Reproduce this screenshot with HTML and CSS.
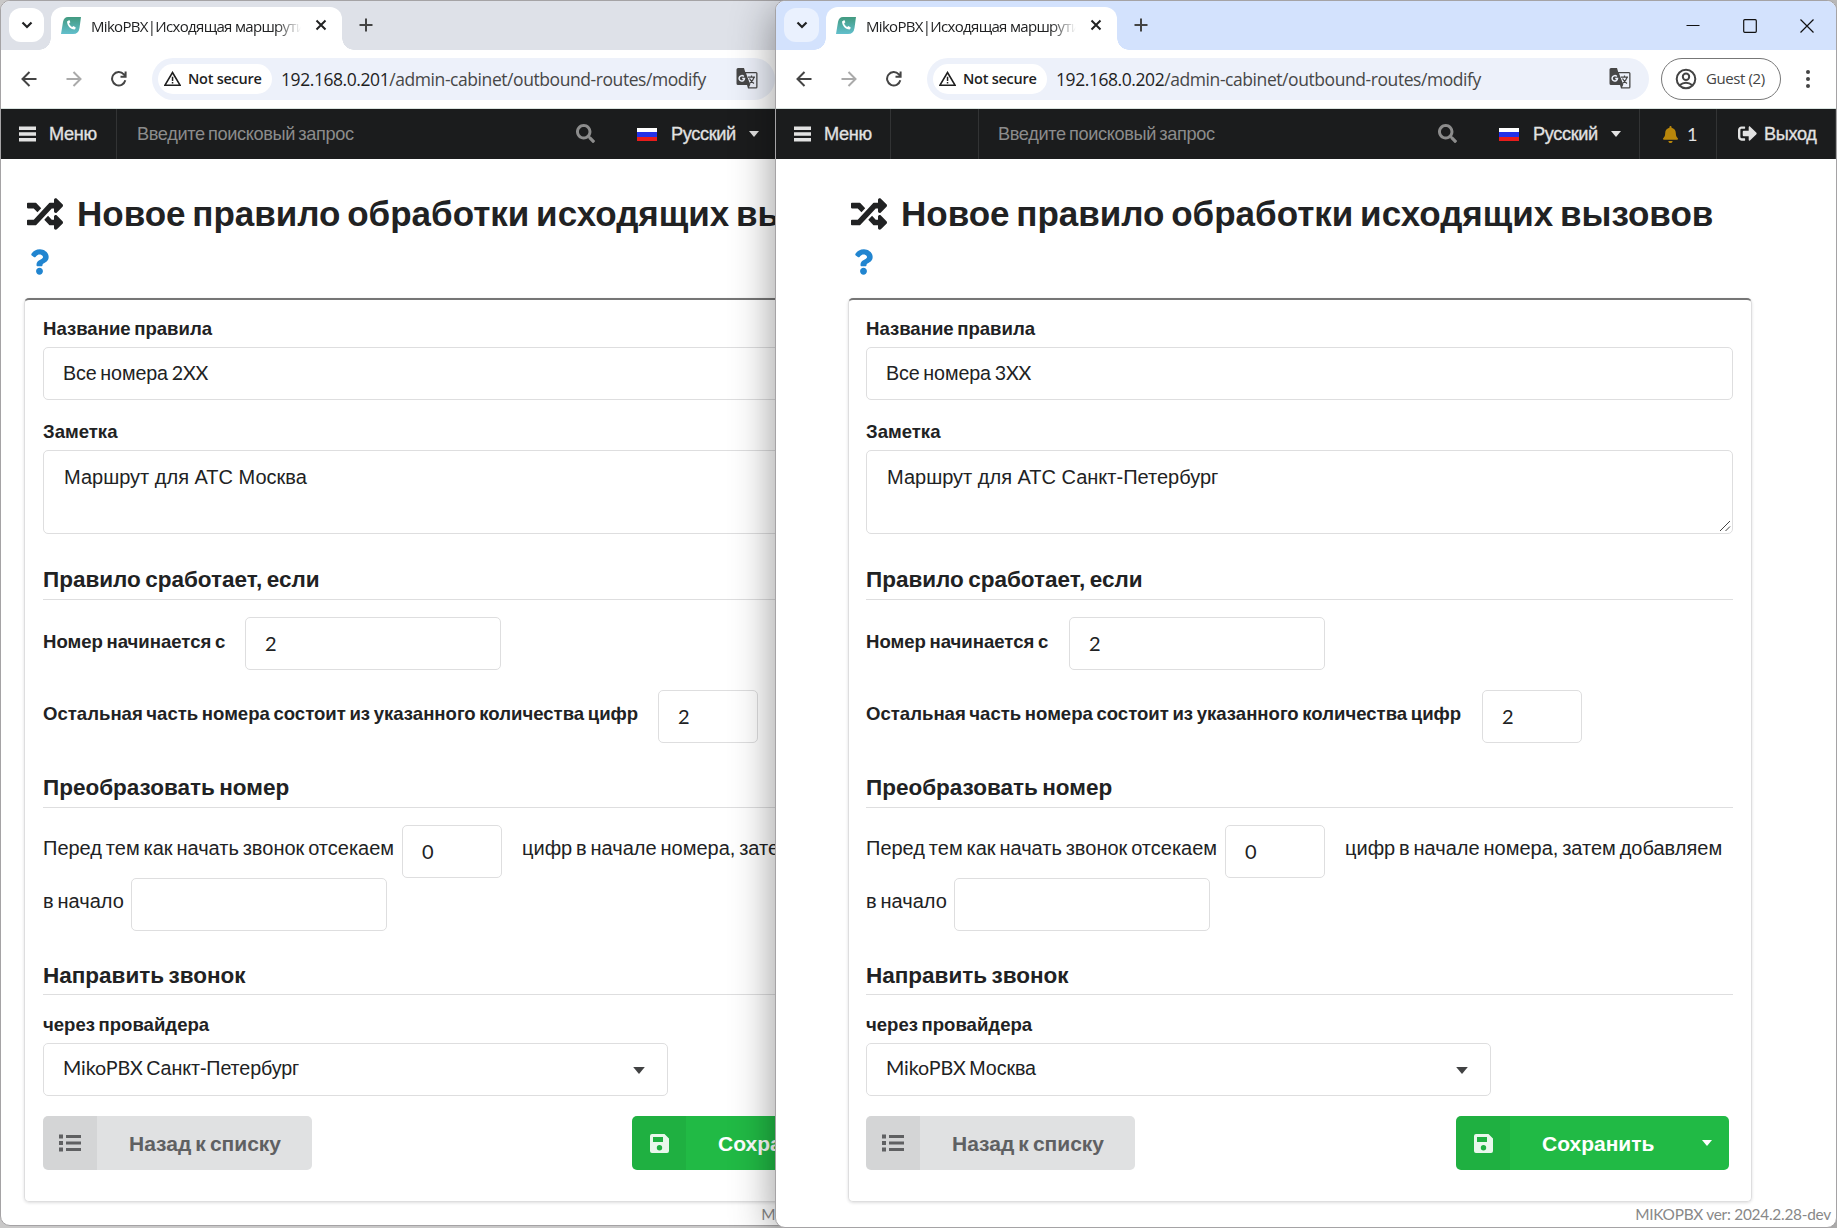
FILE: index.html
```html
<!DOCTYPE html>
<html lang="ru">
<head>
<meta charset="utf-8">
<title>MikoPBX|Исходящая маршрутизация</title>
<link rel="stylesheet" href="styles.css">
</head>
<body>
<svg class="sprite" aria-hidden="true">
  <symbol id="random" viewBox="0 0 512 512"><path d="M504.971 359.029c9.373 9.373 9.373 24.569 0 33.941l-80 79.984c-15.01 15.01-40.971 4.49-40.971-16.971V416h-58.785a12.004 12.004 0 0 1-8.773-3.812l-70.556-75.596 53.333-57.143L352 336h32v-39.981c0-21.438 25.943-31.998 40.971-16.971l80 79.981zM12 176h84l52.781 56.551 53.333-57.143-70.556-75.596A11.999 11.999 0 0 0 122.785 96H12c-6.627 0-12 5.373-12 12v56c0 6.627 5.373 12 12 12zm372 0v39.984c0 21.46 25.961 31.98 40.971 16.971l80-79.984c9.373-9.373 9.373-24.569 0-33.941l-80-79.981C409.943 24.021 384 34.582 384 56.019V96h-58.785a12.004 12.004 0 0 0-8.773 3.812L96 336H12c-6.627 0-12 5.373-12 12v56c0 6.627 5.373 12 12 12h110.785c3.326 0 6.503-1.381 8.773-3.812L352 176h32z"/></symbol>
  <symbol id="question" viewBox="0 0 384 512"><path d="M202.021 0C122.202 0 70.503 32.703 29.914 91.026c-7.363 10.58-5.093 25.086 5.178 32.874l43.138 32.709c10.373 7.865 25.132 6.026 33.253-4.148 25.049-31.381 43.63-49.449 82.757-49.449 30.764 0 68.816 19.799 68.816 49.631 0 22.552-18.617 34.134-48.993 51.164-35.423 19.86-82.299 44.576-82.299 106.405V320c0 13.255 10.745 24 24 24h72.471c13.255 0 24-10.745 24-24v-5.773c0-42.86 125.268-44.645 125.268-160.627C377.504 66.256 286.902 0 202.021 0zM192 373.459c-38.196 0-69.271 31.075-69.271 69.271 0 38.195 31.075 69.270 69.271 69.270s69.271-31.075 69.271-69.271-31.075-69.270-69.271-69.270z"/></symbol>
  <symbol id="search" viewBox="0 0 512 512"><path d="M505 442.7L405.3 343c-4.5-4.5-10.6-7-17-7H372c27.6-35.3 44-79.7 44-128C416 93.1 322.9 0 208 0S0 93.1 0 208s93.1 208 208 208c48.3 0 92.7-16.4 128-44v16.3c0 6.4 2.5 12.5 7 17l99.7 99.7c9.4 9.4 24.6 9.4 33.9 0l28.3-28.3c9.4-9.4 9.4-24.6.1-34zM208 336c-70.7 0-128-57.2-128-128 0-70.7 57.2-128 128-128 70.7 0 128 57.2 128 128 0 70.7-57.2 128-128 128z"/></symbol>
  <symbol id="bell" viewBox="0 0 448 512"><path d="M224 512c35.32 0 63.97-28.65 63.97-64H160.03c0 35.35 28.65 64 63.97 64zm215.39-149.71c-19.32-20.76-55.47-51.99-55.47-154.29 0-77.7-54.48-139.9-127.94-155.16V32c0-17.67-14.32-32-31.98-32s-31.98 14.33-31.98 32v20.84C118.56 68.1 64.08 130.3 64.08 208c0 102.3-36.15 133.53-55.47 154.29-6 6.45-8.66 14.16-8.61 21.71.11 16.4 12.98 32 32.1 32h383.8c19.12 0 32-15.6 32.1-32 .05-7.55-2.61-15.27-8.61-21.71z"/></symbol>
  <symbol id="signout" viewBox="0 0 512 512"><path d="M497 273L329 441c-15 15-41 4.5-41-17v-96H152c-13.3 0-24-10.7-24-24v-96c0-13.3 10.7-24 24-24h136V88c0-21.4 25.9-32 41-17l168 168c9.3 9.4 9.3 24.6 0 34zM192 436v-40c0-6.6-5.4-12-12-12H96c-17.7 0-32-14.3-32-32V160c0-17.7 14.3-32 32-32h84c6.6 0 12-5.4 12-12V76c0-6.6-5.4-12-12-12H96c-53 0-96 43-96 96v192c0 53 43 96 96 96h84c6.6 0 12-5.4 12-12z"/></symbol>
  <symbol id="bars" viewBox="0 0 17 16"><path d="M0 .5h17v3.4H0zM0 6.3h17v3.4H0zM0 12.1h17v3.4H0z"/></symbol>
  <symbol id="caret" viewBox="0 0 10 6"><path d="M0 0h10L5 6z"/></symbol>
  <symbol id="list" viewBox="0 0 22 18"><path d="M0 .5h4v4H0zM0 7h4v4H0zM0 13.5h4v4H0zM7 1h15v3H7zM7 7.5h15v3H7zM7 14h15v3H7z"/></symbol>
  <symbol id="save" viewBox="0 0 19 19"><path fill-rule="evenodd" d="M2 0h12.5L19 4.5V17a2 2 0 0 1-2 2H2a2 2 0 0 1-2-2V2a2 2 0 0 1 2-2zM3 3v5h10V3zM9.500 11a2.700 2.700 0 1 0 0 5.400 2.700 2.700 0 0 0 0-5.400z"/></symbol>
  <symbol id="logo" viewBox="0 0 20 17"><path fill="url(#logofill)" d="M7 0h13l-1.500 11q-.8 6-6.500 6H0L2 5Q3 0 7 0z"/><path d="M6 4.500c.3 4.500 3 7.500 7.700 7.900l1.200-1.600-2.300-1.700-1.500.8C9.500 9 8.500 7.800 8.200 6.200l1.200-.9L8.300 3z" fill="#fff"/></symbol>
  <symbol id="chevron" viewBox="0 0 12 8"><path d="M1.500 1.500L6 6l4.500-4.500" fill="none" stroke="currentColor" stroke-width="2.200"/></symbol>
  <symbol id="cross" viewBox="0 0 12 12"><path d="M1.500 1.500l9 9M10.500 1.500l-9 9" fill="none" stroke="currentColor" stroke-width="2"/></symbol>
  <symbol id="plus" viewBox="0 0 14 14"><path d="M7 .5v13M.5 7h13" fill="none" stroke="currentColor" stroke-width="2"/></symbol>
  <symbol id="back" viewBox="0 0 16 16"><path d="M15.500 8H2M8.500 1L1.500 8l7 7" fill="none" stroke="currentColor" stroke-width="2"/></symbol>
  <symbol id="reload" viewBox="0 0 16 16"><path d="M14.300 9.300A6.700 6.700 0 1 1 12.800 3.300L15 5.500M14.600 .5v5.300H9.500" fill="none" stroke="currentColor" stroke-width="2"/></symbol>
  <symbol id="warn" viewBox="0 0 17 15"><path d="M8.500 1.500L16 14.200H1z" fill="none" stroke="currentColor" stroke-width="1.600"/><path d="M7.800 5.800h1.500v4.200H7.800zM7.800 11h1.500v1.500H7.800z"/></symbol>
  <symbol id="translate" viewBox="0 0 22 21"><path d="M2 0h6l1.200 4H20q1.500 0 1.500 1.500V19q0 1.500-1.500 1.500h-8L11 17H2q-1.500 0-1.500-1.500v-14Q.5 0 2 0z"/><path fill="#edf1fa" d="M10 5.300h10.200v13.900H13l1.300-2.500z"/><path d="M7.800 8.500a2.700 2.700 0 1 0 .7 2H6.200" fill="none" stroke="#edf1fa" stroke-width="1.500"/><path d="M12 9.200h7M15.500 7.500v1.700M18 9.500q-1 3.500-4.500 6M13.500 10.500q1.500 3 4.500 5" fill="none" stroke="currentColor" stroke-width="1.200"/></symbol>
  <symbol id="person" viewBox="0 0 22 22"><circle cx="11" cy="11" r="9.300" fill="none" stroke="currentColor" stroke-width="2"/><circle cx="11" cy="8.700" r="3.200" fill="none" stroke="currentColor" stroke-width="2"/><path d="M4.500 17.200q6.500-5 13 0" fill="none" stroke="currentColor" stroke-width="2"/></symbol>
  <defs><linearGradient id="logofill" x1="0" y1="0" x2="0" y2="1"><stop offset="0" stop-color="#429a80"/><stop offset="1" stop-color="#62bfcc"/></linearGradient></defs>
</svg>

<main class="desktop">
  <section class="window window-back">
    <div class="tabstrip">
      <div class="tab-search"><svg class="i-chevron"><use href="#chevron"/></svg></div>
      <div class="tab">
        <svg class="i-logo"><use href="#logo"/></svg>
        <span class="tab-title">MikoPBX|Исходящая маршрути</span>
        <svg class="i-cross"><use href="#cross"/></svg>
      </div>
      <svg class="i-plus"><use href="#plus"/></svg>
    </div>
    <div class="toolbar">
      <svg class="i-nav"><use href="#back"/></svg>
      <svg class="i-nav i-forward"><use href="#back"/></svg>
      <svg class="i-nav"><use href="#reload"/></svg>
      <div class="omnibox">
        <div class="chip"><svg class="i-warn"><use href="#warn"/></svg><span>Not secure</span></div>
        <span class="url"><b>192.168.0.201</b>/admin-cabinet/outbound-routes/modify</span>
        <svg class="i-translate"><use href="#translate"/></svg>
      </div>
    </div>
    <nav class="menu">
      <div class="menu-main"><svg class="i-bars"><use href="#bars"/></svg><span>Меню</span></div>
      <div class="menu-search"><span>Введите поисковый запрос</span><svg class="i-search"><use href="#search"/></svg></div>
      <div class="menu-lang"><i class="flag"></i><span>Русский</span><svg class="i-caret"><use href="#caret"/></svg></div>
    </nav>
    <div class="page">
      <h1 class="title"><svg class="i-random"><use href="#random"/></svg><span>Новое правило обработки исходящих вызовов</span></h1>
      <svg class="i-question"><use href="#question"/></svg>
      <form class="segment">
        <div class="label">Название правила</div>
        <div class="input name">Все номера <span class="lat">2XX</span></div>
        <div class="label label-next">Заметка</div>
        <div class="textarea">Маршрут для АТС Москва</div>
        <h3 class="header">Правило сработает, если</h3>
        <div class="row"><span class="label starts">Номер начинается с</span><div class="input wide lat">2</div></div>
        <div class="row row-next"><span class="label rest">Остальная часть номера состоит из указанного количества цифр</span><div class="input small lat">2</div></div>
        <h3 class="header">Преобразовать номер</h3>
        <div class="row"><span class="text trim">Перед тем как начать звонок отсекаем</span><div class="input small lat">0</div><span class="text after">цифр в начале номера, затем добавляем</span></div>
        <div class="row"><span class="text prepend">в начало</span><div class="input wide"></div></div>
        <h3 class="header header-last">Направить звонок</h3>
        <div class="label">через провайдера</div>
        <div class="input dropdown"><span><span class="lat">MikoPBX</span> Санкт-Петербург</span><svg class="i-caret"><use href="#caret"/></svg></div>
        <div class="actions">
          <div class="button"><span class="button-icon"><svg class="i-list"><use href="#list"/></svg></span><span class="button-text">Назад к списку</span></div>
          <div class="button green"><span class="button-icon"><svg class="i-save"><use href="#save"/></svg></span><span class="button-text">Сохранить</span><svg class="i-caret"><use href="#caret"/></svg></div>
        </div>
      </form>
    </div>
    <footer class="version">MIKOPBX ver: 2024.2.28-dev</footer>
  </section>

  <section class="window window-front">
    <div class="tabstrip">
      <div class="tab-search"><svg class="i-chevron"><use href="#chevron"/></svg></div>
      <div class="tab">
        <svg class="i-logo"><use href="#logo"/></svg>
        <span class="tab-title">MikoPBX|Исходящая маршрути</span>
        <svg class="i-cross"><use href="#cross"/></svg>
      </div>
      <svg class="i-plus"><use href="#plus"/></svg>
      <div class="controls">
        <svg viewBox="0 0 14 14"><path d="M.5 6.500h13"/></svg>
        <svg viewBox="0 0 14 14"><rect x=".7" y=".7" width="12.600" height="12.600" rx="1"/></svg>
        <svg viewBox="0 0 14 14"><path d="M.5.5l13 13M13.500.5l-13 13"/></svg>
      </div>
    </div>
    <div class="toolbar">
      <svg class="i-nav"><use href="#back"/></svg>
      <svg class="i-nav i-forward"><use href="#back"/></svg>
      <svg class="i-nav"><use href="#reload"/></svg>
      <div class="omnibox">
        <div class="chip"><svg class="i-warn"><use href="#warn"/></svg><span>Not secure</span></div>
        <span class="url"><b>192.168.0.202</b>/admin-cabinet/outbound-routes/modify</span>
        <svg class="i-translate"><use href="#translate"/></svg>
      </div>
      <div class="guest"><svg class="i-person"><use href="#person"/></svg><span>Guest (2)</span></div>
      <div class="dots"><i></i><i></i><i></i></div>
    </div>
    <nav class="menu">
      <div class="menu-main"><svg class="i-bars"><use href="#bars"/></svg><span>Меню</span></div>
      <div class="menu-gap"></div>
      <div class="menu-search"><span>Введите поисковый запрос</span><svg class="i-search"><use href="#search"/></svg></div>
      <div class="menu-lang"><i class="flag"></i><span>Русский</span><svg class="i-caret"><use href="#caret"/></svg></div>
      <div class="menu-bell"><svg class="i-bell"><use href="#bell"/></svg><span class="lat">1</span></div>
      <div class="menu-exit"><svg class="i-signout"><use href="#signout"/></svg><span>Выход</span></div>
    </nav>
    <div class="page">
      <h1 class="title"><svg class="i-random"><use href="#random"/></svg><span>Новое правило обработки исходящих вызовов</span></h1>
      <svg class="i-question"><use href="#question"/></svg>
      <form class="segment">
        <div class="label">Название правила</div>
        <div class="input name">Все номера <span class="lat">3XX</span></div>
        <div class="label label-next">Заметка</div>
        <div class="textarea">Маршрут для АТС Санкт-Петербург<svg class="grip" viewBox="0 0 12 12"><path d="M1 11L11 1M6.500 11L11 6.500"/></svg></div>
        <h3 class="header">Правило сработает, если</h3>
        <div class="row"><span class="label starts">Номер начинается с</span><div class="input wide lat">2</div></div>
        <div class="row row-next"><span class="label rest">Остальная часть номера состоит из указанного количества цифр</span><div class="input small lat">2</div></div>
        <h3 class="header">Преобразовать номер</h3>
        <div class="row"><span class="text trim">Перед тем как начать звонок отсекаем</span><div class="input small lat">0</div><span class="text after">цифр в начале номера, затем добавляем</span></div>
        <div class="row"><span class="text prepend">в начало</span><div class="input wide"></div></div>
        <h3 class="header header-last">Направить звонок</h3>
        <div class="label">через провайдера</div>
        <div class="input dropdown"><span><span class="lat">MikoPBX</span> Москва</span><svg class="i-caret"><use href="#caret"/></svg></div>
        <div class="actions">
          <div class="button"><span class="button-icon"><svg class="i-list"><use href="#list"/></svg></span><span class="button-text">Назад к списку</span></div>
          <div class="button green"><span class="button-icon"><svg class="i-save"><use href="#save"/></svg></span><span class="button-text">Сохранить</span><svg class="i-caret"><use href="#caret"/></svg></div>
        </div>
      </form>
    </div>
    <footer class="version">MIKOPBX ver: 2024.2.28-dev</footer>
  </section>
</main>
</body>
</html>
```
FILE: styles.css
```css
* { box-sizing: border-box; }
body { margin: 0; font: 20px/24px "Liberation Sans", sans-serif; color: #212223; }
svg { flex: none; fill: currentColor; display: block; }
.sprite { position: absolute; width: 0; height: 0; }
.desktop { position: relative; width: 1837px; height: 1228px; overflow: hidden; background: #c9c8c8; }
.lat { font-family: Lato, sans-serif; }

.window { position: absolute; display: flex; flex-direction: column; overflow: hidden; background: #fff; border: 1px solid #a5a3a5; border-radius: 10px; white-space: nowrap; }
.window-back { left: 0; top: 0; width: 963px; height: 1226px; --strip: #dee1e8; --button: #fff; --pad: 23px; }
.window-front { left: 775px; top: 0; width: 1062px; height: 1228px; --strip: #d3e2fd; --button: #eaf1fe; --pad: 72px; box-shadow: 0 8px 44px rgba(0, 0, 0, .42); }

.tabstrip { flex: none; height: 49px; display: flex; align-items: flex-start; background: var(--strip); padding: 6px 0 0 8px; }
.tab-search { width: 35px; height: 34px; margin: 1px 7px 0 0; border-radius: 12px; background: var(--button); display: flex; align-items: center; justify-content: center; }
.tab { position: relative; width: 291px; height: 43px; padding: 0 15px 7px 10px; border-radius: 12px 12px 0 0; background: #fff; display: flex; align-items: center; }
.tab::before, .tab::after { content: ""; position: absolute; bottom: 0; width: 12px; height: 12px; }
.tab::before { left: -12px; background: radial-gradient(circle at 0 0, transparent 11.5px, #fff 12px); }
.tab::after { right: -12px; background: radial-gradient(circle at 100% 0, transparent 11.5px, #fff 12px); }
.tab-title { width: 210px; margin: 1px 14px 0 10px; overflow: hidden; font: 15px/22px "Open Sans", sans-serif; letter-spacing: -.68px; -webkit-mask-image: linear-gradient(90deg, #000 88%, transparent); mask-image: linear-gradient(90deg, #000 88%, transparent); }
.i-chevron { width: 12px; height: 8px; }
.i-logo { width: 20px; height: 17px; }
.i-cross { width: 12px; height: 12px; }
.i-plus { width: 14px; height: 14px; margin: 11px 0 0 17px; color: #444; }
.controls { margin: 12px 22px 0 auto; display: flex; gap: 43px; }
.controls svg { width: 14px; height: 14px; fill: none; stroke: #111; stroke-width: 1.2; }

.toolbar { flex: none; height: 59px; display: flex; align-items: center; padding: 0 0 1px 20px; border-bottom: 1px solid #d9e3e0; color: #444; background: #fff; }
.i-nav { width: 16px; height: 16px; margin-right: 29px; }
.i-forward { transform: scaleX(-1); color: #aaa; }
.omnibox { width: 623px; height: 42px; margin-left: -4px; padding: 0 17px 0 6px; border-radius: 21px; background: #edf1fa; display: flex; align-items: center; }
.window-front .omnibox { width: 722px; padding-right: 18px; }
.chip { width: 114px; height: 30px; padding-left: 6px; border-radius: 15px; background: #fff; display: flex; align-items: center; gap: 7px; color: #1f1f1f; font: 600 14.5px/20px "Open Sans", sans-serif; letter-spacing: -.25px; }
.i-warn { width: 17px; height: 15px; }
.url { margin: 0 auto 0 9px; font: 17.5px/24px "Open Sans", sans-serif; letter-spacing: -.43px; color: #474747; }
.url b { font-weight: 400; color: #1f1f1f; }
.i-translate { width: 22px; height: 21px; color: #474747; }
.guest { width: 120px; height: 42px; margin-left: 12px; padding-left: 13px; border: 1px solid #777; border-radius: 21px; display: flex; align-items: center; gap: 9px; font: 15px/20px "Open Sans", sans-serif; letter-spacing: -.4px; }
.guest span { padding-bottom: 1px; }
.i-person { width: 22px; height: 22px; }
.dots { margin-left: 25px; display: flex; flex-direction: column; gap: 3px; }
.dots i { width: 4px; height: 4px; border-radius: 50%; background: #444; }

.menu { flex: none; height: 50px; display: flex; background: #1b1c1d; color: #e2e2e2; font-size: 18.2px; letter-spacing: -.37px; word-spacing: -.08em; }
.menu > div { display: flex; align-items: center; border-right: 1px solid #323334; }
.menu-main { width: 116px; padding-left: 18px; gap: 13px; -webkit-text-stroke: .3px currentColor; }
.window-front .menu-main { width: 115px; }
.menu-gap { width: 88px; }
.menu-search { width: 500px; padding: 0 21px 0 20px; justify-content: space-between; color: #8c8c8c; }
.menu .menu-search { border-color: #1b1c1d; }
.window-front .menu-search { padding-left: 19px; }
.menu-lang { width: 161px; padding-left: 20px; -webkit-text-stroke: .3px currentColor; }
.menu-lang .i-caret { margin-left: 13px; }
.flag { width: 20px; height: 13px; margin-right: 14px; background: linear-gradient(#fff 33%, #2331e8 33% 66%, #e81c1c 66%); }
.menu-bell { width: 77px; padding-left: 23px; gap: 9px; }
.menu-exit { flex: 1; padding-left: 21px; gap: 7px; -webkit-text-stroke: .3px currentColor; }
.i-bars { width: 17px; height: 16px; }
.i-search { width: 19px; height: 19px; margin-top: -2px; }
.i-caret { width: 10px; height: 6px; }
.i-bell { width: 15px; height: 17px; color: #b8860b; }
.i-signout { width: 19px; height: 19px; margin-top: -1px; }

.page { width: calc(904px + 2 * var(--pad)); padding: 34px var(--pad) 0; flex: none; }
.title { height: 42px; margin: 0; display: flex; align-items: center; gap: 14px; padding-left: 3px; font-size: 35px; line-height: 42px; font-weight: 700; word-spacing: -.085em; }
.i-random { width: 36px; height: 36px; }
.i-question { width: 19px; height: 26px; margin: 14px 0 23px 6px; color: #2185d0; }
.segment { height: 904px; padding: 16px 18px 0; border: 1px solid #dededf; border-top: 2px solid #767676; border-radius: 5px; box-shadow: 0 1px 3px rgba(34, 36, 38, .15); }
.window-front .segment { padding-left: 17px; }
.label { height: 25px; margin-bottom: 6px; font-size: 18.57px; line-height: 25px; font-weight: 700; word-spacing: -.085em; }
.label-next { margin-top: 19px; }
.input { height: 53px; padding: 0 19px 2px; border: 1px solid #dededf; border-radius: 5px; display: flex; align-items: center; white-space: pre; word-spacing: -.085em; }
.input.name { font-size: 19.7px; letter-spacing: -.1px; }
.textarea { position: relative; height: 84px; padding: 14px 20px; border: 1px solid #dededf; border-radius: 5px; }
.grip { position: absolute; right: 1px; bottom: 1px; width: 12px; height: 12px; fill: none; stroke: #444; }
.header { height: 34px; margin: 32px 0 17px; padding-bottom: 5px; border-bottom: 1px solid #dededf; font-size: 22.5px; line-height: 28px; font-weight: 700; word-spacing: -.085em; }
.header-last { margin-top: 31px; height: 33px; margin-bottom: 17px; }
.row { display: flex; align-items: center; }
.row-next { margin-top: 20px; }
.row-next + .header { margin-top: 31px; }
.row .label { margin: -4px 0 0; }
.row-next .label { margin-top: -6px; }
.starts { width: 202px; }
.rest { width: 615px; }
.window-front .starts { width: 203px; }
.window-front .rest { width: 616px; }
.wide { width: 256px; }
.small { width: 100px; }
.text { margin-top: -7px; word-spacing: -.085em; }
.trim { width: 359px; }
.after { margin-left: 20px; }
.prepend { width: 88px; }
.dropdown { width: 625px; padding-bottom: 4px; font-size: 19.7px; letter-spacing: -.1px; justify-content: space-between; }
.dropdown .i-caret { width: 12px; height: 7px; margin: 6px 3px 0 0; opacity: .85; }
.actions { margin-top: 20px; display: flex; justify-content: space-between; padding-right: 4px; }
.button { width: 269px; height: 54px; border-radius: 5px; overflow: hidden; display: flex; align-items: center; background: #e0e1e2; color: #5f6062; font-size: 21px; font-weight: 700; word-spacing: -.085em; }
.button-icon { width: 54px; height: 54px; margin-right: 32px; background: rgba(0, 0, 0, .05); display: flex; align-items: center; justify-content: center; }
.button-text { padding-top: 2px; }
.button.green { width: 273px; background: #21ba45; color: #fff; }
.green .i-caret { width: 12px; height: 6px; margin: 0 16px 0 auto; }
.i-list { width: 22px; height: 18px; }
.i-save { width: 19px; height: 19px; opacity: .9; }
.version { margin: 2px 5px 0 auto; font: 15.4px/20px Lato, sans-serif; letter-spacing: -.25px; color: #888; }
```
